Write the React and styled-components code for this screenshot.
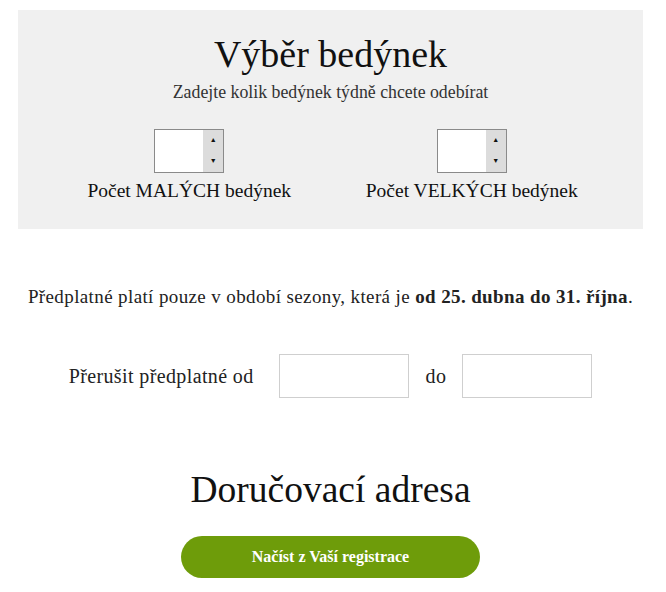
import React from "react";
import styled, { createGlobalStyle } from "styled-components";

const Global = createGlobalStyle`
  body {
    margin: 0;
    background: #fff;
    font-family: "Liberation Serif", "DejaVu Serif", serif;
    color: #222;
  }
`;

const Page = styled.div`
  width: 666px;
  padding: 10px 23px 0 18px;
  box-sizing: border-box;
`;

const Panel = styled.section`
  background: #f0f0f0;
  padding: 22px 30px 26px;
  text-align: center;
`;

const Title = styled.h1`
  margin: 0;
  font-weight: 400;
  font-size: 38px;
  line-height: 44px;
  color: #111;
`;

const Subtitle = styled.p`
  margin: 5px 0 0;
  font-size: 17.8px;
  line-height: 22px;
  color: #333;
`;

const Columns = styled.div`
  display: grid;
  grid-template-columns: 1fr 1fr;
  margin-top: 26px;
`;

const Column = styled.div`
  display: flex;
  flex-direction: column;
  align-items: center;
`;

const Spinner = styled.div`
  display: flex;
  width: 70px;
  height: 44px;
  box-sizing: border-box;
  border: 1px solid #8a8a8a;
  background: #fff;
`;

const SpinInput = styled.input`
  flex: 1;
  min-width: 0;
  border: none;
  outline: none;
  background: transparent;
  padding: 0 4px;
  font: inherit;
`;

const Arrows = styled.div`
  width: 20px;
  background: #dcdcdc;
  display: flex;
  flex-direction: column;
  justify-content: space-around;
  align-items: center;
  font-size: 7px;
  line-height: 1;
  color: #111;
`;

const ColumnLabel = styled.label`
  margin-top: 6px;
  font-size: 19.5px;
  line-height: 24px;
  color: #111;
`;

const Notice = styled.p`
  margin: 57px 0 0;
  text-align: center;
  font-size: 19px;
  letter-spacing: 0.38px;
  line-height: 22px;
  color: #222;

  b {
    font-weight: 700;
  }
`;

const PauseRow = styled.div`
  display: flex;
  align-items: center;
  justify-content: center;
  margin-top: 46px;
  font-size: 20px;
  letter-spacing: 0.38px;
  color: #222;
`;

const RowText = styled.span`
  margin: ${(p) => p.$m || "0"};
`;

const DateBox = styled.input`
  width: 130px;
  height: 44px;
  box-sizing: border-box;
  border: 1px solid #cfcfcf;
  background: #fff;
  outline: none;
  font: inherit;
`;

const SubHeading = styled.h2`
  margin: 71px 0 0;
  text-align: center;
  font-weight: 400;
  font-size: 37.5px;
  line-height: 42px;
  color: #111;
`;

const LoadButton = styled.button`
  display: block;
  margin: 25px auto 0;
  width: 299px;
  height: 42px;
  border: none;
  border-radius: 21px;
  background: #6e9c0a;
  color: #fff;
  font-family: inherit;
  font-size: 16px;
  font-weight: 700;
  cursor: pointer;
`;

const NumberField = ({ label }) => (
  <Column>
    <Spinner>
      <SpinInput type="text" />
      <Arrows>
        <span>▲</span>
        <span>▼</span>
      </Arrows>
    </Spinner>
    <ColumnLabel>{label}</ColumnLabel>
  </Column>
);

const App = () => (
  <Page>
    <Global />
    <Panel>
      <Title>Výběr bedýnek</Title>
      <Subtitle>Zadejte kolik bedýnek týdně chcete odebírat</Subtitle>
      <Columns>
        <NumberField label="Počet MALÝCH bedýnek" />
        <NumberField label="Počet VELKÝCH bedýnek" />
      </Columns>
    </Panel>
    <Notice>
      Předplatné platí pouze v období sezony, která je{" "}
      <b>od 25. dubna do 31. října</b>.
    </Notice>
    <PauseRow>
      <RowText $m="0 25px 0 0">Přerušit předplatné od</RowText>
      <DateBox />
      <RowText $m="0 16px 0 17px">do</RowText>
      <DateBox />
    </PauseRow>
    <SubHeading>Doručovací adresa</SubHeading>
    <LoadButton>Načíst z Vaší registrace</LoadButton>
  </Page>
);

export default App;
